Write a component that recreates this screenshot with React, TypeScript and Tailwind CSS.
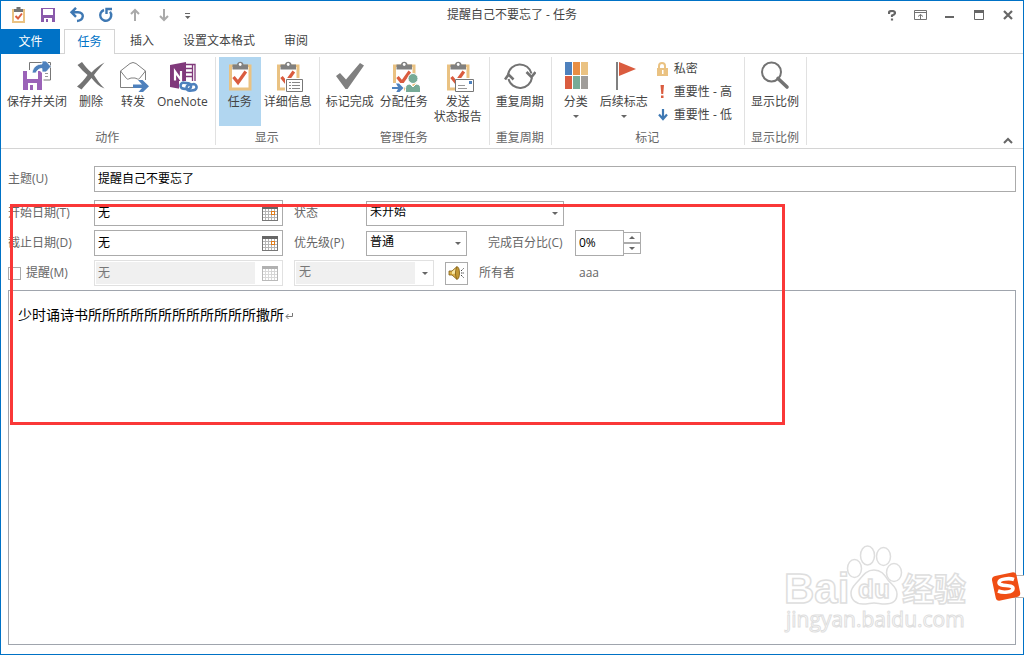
import { ReactNode } from "react";

type RibbonButtonProps = {
  label: string;
  icon: ReactNode;
  active?: boolean;
  menu?: boolean;
};

type RibbonGroupProps = {
  title: string;
  children: ReactNode;
};

function Clipboard() {
  return (
    <>
      <path d="M5 4.500h22.500v26H5z" fill="#eac282" />
      <path d="M8 7h16.500v20.500H8z" fill="#fff" />
      <path d="M8.500 4.500h4.500a3.300 3.300 0 0 1 6.500 0H24v5H8.500z" fill="#808080" />
      <circle cx="16.200" cy="4.500" r="1.400" fill="#fff" />
      <path d="M9.500 17l4.500 5.500 7.800-11" fill="none" stroke="#da5c3f" strokeWidth="3.200" />
    </>
  );
}

function BigIcon({ children }: { children: ReactNode }) {
  return (
    <svg width="32" height="32" viewBox="0 0 32 32" aria-hidden="true">
      {children}
    </svg>
  );
}

function SaveCloseIcon() {
  return (
    <BigIcon>
      <path d="M8.500 10V2.500h21v17.500h-7" fill="#fff" stroke="#777" />
      <path d="M24 10.500h3M24 13.500h3M24 16.500h3" stroke="#999" />
      <path d="M2 11h17l2 2v17H2z" fill="#9b63b8" />
      <path d="M6 11h11v8H6z" fill="#fff" />
      <path d="M7 23h9v7H7z" fill="#fff" />
      <path d="M9 25h3v5H9z" fill="#9b63b8" />
      <path d="M11 13c1-6 5-9 10-9V1h4l5 5.500-5 5.500h-4V8.500c-3 0-5 1.500-6 4.500z" fill="#4e81bd" stroke="#fff" strokeWidth=".8" />
    </BigIcon>
  );
}

function DeleteIcon() {
  return (
    <BigIcon>
      <path d="M2.500 5L7 2c3 4 6 7.500 9.500 10.500C20 9 24 5 29.500 2.500c-3 3.500-7.500 8-10.500 12.500 3 5 6 9 10.500 13.500-5.500-2-9.500-6-13-10.500C13 22 10 25.500 6.500 29.500L2 26.500c4-3 7.500-7 10.500-11.500C9 12 6 9 2.500 5z" fill="#737373" />
    </BigIcon>
  );
}

function ForwardIcon() {
  return (
    <BigIcon>
      <path d="M28.500 20v-9L19 3.500q-3-2-6 0L3.500 11v16.500H16" fill="none" stroke="#808080" />
      <path d="M3.500 11l6 7.500q1 1 2 .5l2.500-1h4l2.500 1q1 .5 2-.5l6-7.500M3.500 11h1M28.500 11h-1" fill="none" stroke="#808080" />
      <path d="M16 24.500h9l-4-4.500h4.500l6.500 6.300-6.500 6.200H21l4-4.500h-9z" fill="#4e81bd" />
    </BigIcon>
  );
}

function OneNoteIcon() {
  return (
    <BigIcon>
      <path d="M19 4.500h10v20H19" fill="#fff" stroke="#80397b" strokeWidth="1.300" />
      <path d="M20 8.500h6M20 12.500h6M20 16.500h6M26.500 5v19" stroke="#80397b" strokeWidth="1.300" />
      <path d="M4 5l16-3v28L4 27z" fill="#80397b" />
      <path d="M9 20.500V11.500l6 8.500V11" fill="none" stroke="#fff" strokeWidth="2.200" />
      <path d="M13 21h19v11H13z" fill="#fff" />
      <g fill="none" stroke="#4e81bd" strokeWidth="2.600">
        <rect x="14.500" y="23" width="10.500" height="6" rx="3" transform="rotate(8 20 26)" />
        <rect x="20.500" y="24.500" width="10" height="6" rx="3" transform="rotate(-8 25 27)" />
      </g>
    </BigIcon>
  );
}

function TaskIcon() {
  return (
    <BigIcon>
      <Clipboard />
    </BigIcon>
  );
}

function DetailsIcon() {
  return (
    <BigIcon>
      <Clipboard />
      <path d="M13 18h19v14H13z" fill="#fff" />
      <path d="M14.500 19.500h16v12h-16z" fill="#fff" stroke="#777" />
      <path d="M17 22.500h2M17 25.500h2M17 28.500h2M20 22.500h8M20 25.500h8M20 28.500h8" stroke="#888" />
    </BigIcon>
  );
}

function CheckIcon() {
  return (
    <BigIcon>
      <path d="M2 16l4-3 6 6.500L26 3l4 2.500L13.500 29h-2z" fill="#808080" />
    </BigIcon>
  );
}

function AssignIcon() {
  return (
    <BigIcon>
      <Clipboard />
      <path d="M3 23h13v9H3z" fill="#fff" />
      <path d="M4 27h6l-2-3.500h3l4.500 4.500-4.500 4.500H8L10 29H4z" fill="#4e81bd" />
      <circle cx="25" cy="18.500" r="5" fill="#77ab97" stroke="#fff" />
      <path d="M17.500 32.500v-4q0-4.500 4.500-4.500l3 3 3-3q4.500 0 4.500 4.500v4z" fill="#77ab97" stroke="#fff" />
    </BigIcon>
  );
}

function SendIcon() {
  return (
    <BigIcon>
      <Clipboard />
      <path d="M13 18h19v14H13z" fill="#fff" />
      <path d="M13.500 19.500h18v12h-18z" fill="#fff" stroke="#777" />
      <path d="M16 25.500h7M16 28.500h9" stroke="#999" />
      <path d="M27 21h3v3h-3z" fill="#4e81bd" />
    </BigIcon>
  );
}

function RecurrenceIcon() {
  return (
    <BigIcon>
      <path d="M4 14.500a12 12 0 0 1 23.500-1M28 17.500a12 12 0 0 1-23.500 1.500" fill="none" stroke="#737373" strokeWidth="2" />
      <path d="M22.500 12l5 5 4-5M1 19.500l3.500-5 5 5" fill="none" stroke="#737373" strokeWidth="2.600" />
    </BigIcon>
  );
}

function CategoriesIcon() {
  return (
    <BigIcon>
      <path d="M5 2h7v13H5z" fill="#4e81bd" />
      <path d="M13 2h7v13h-7z" fill="#e88e43" />
      <path d="M21 2h7v13h-7z" fill="#eac282" />
      <path d="M5 16h7v13H5z" fill="#da5c3f" />
      <path d="M13 16h7v13h-7z" fill="#77ab97" />
      <path d="M21 16h7v13h-7z" fill="#a09d9a" />
    </BigIcon>
  );
}

function FlagIcon() {
  return (
    <BigIcon>
      <path d="M8 2h2v28H8z" fill="#808080" />
      <path d="M11 2l17 7-17 7z" fill="#da5c3f" />
    </BigIcon>
  );
}

function ZoomIcon() {
  return (
    <BigIcon>
      <circle cx="12.500" cy="12" r="9.500" fill="none" stroke="#737373" strokeWidth="2" />
      <path d="M19 18.500l9 8.500" stroke="#737373" strokeWidth="3.600" strokeLinecap="round" />
    </BigIcon>
  );
}

function Triangle({ up }: { up?: boolean }) {
  return (
    <svg width="6" height="3" viewBox="0 0 6 3" aria-hidden="true">
      <path d={up ? "M0 3h6L3 0z" : "M0 0h6L3 3z"} fill="#666" />
    </svg>
  );
}

function RibbonButton({ label, icon, active, menu }: RibbonButtonProps) {
  return (
    <button
      className={`flex h-[69px] min-w-[42px] flex-col items-center px-[3px] pt-[3px] ${
        active ? "bg-[#b1d6f0]" : ""
      }`}
    >
      {icon}
      <span className="mt-[2px] whitespace-pre-line leading-[15px]">{label}</span>
      {menu && (
        <span className="mt-[6px]">
          <Triangle />
        </span>
      )}
    </button>
  );
}

function RibbonGroup({ title, children }: RibbonGroupProps) {
  return (
    <section className="flex flex-col gap-1 border-r border-[#e1e1e1] pr-1 pl-[3px]">
      <div className="flex">{children}</div>
      <h2 className="text-center leading-[15px] text-[#666]">{title}</h2>
    </section>
  );
}

function CalendarIcon({ disabled }: { disabled?: boolean }) {
  return (
    <svg width="16" height="15" viewBox="0 0 16 15" shapeRendering="crispEdges" aria-hidden="true">
      <g opacity={disabled ? 0.5 : 1}>
        <path d="M.5.500h15v14H.5z" fill="#fff" stroke="#777" />
        <path d="M0 0h16v3H0z" fill="#666" />
        <path d="M3.500 3v11M6.500 3v11M9.500 3v11M12.500 3v11M1 5.500h14M1 8.500h14M1 11.500h14" stroke="#b5b5b5" />
        <path d="M9.500 5.500h3v3h-3z" fill="#fff" stroke={disabled ? "#aaa" : "#e07b1a"} />
      </g>
    </svg>
  );
}

function DateField({ id, disabled }: { id: string; disabled?: boolean }) {
  return (
    <div
      className={`flex h-[26px] w-[189px] items-center border p-px ${
        disabled ? "border-[#e1e1e1]" : "border-[#ababab]"
      }`}
    >
      <input
        id={id}
        defaultValue="无"
        disabled={disabled}
        className="h-full w-[159px] px-[2px] pb-[2px] outline-none disabled:bg-[#f0f0f0] disabled:text-[#777]"
      />
      <button type="button" aria-label="选择日期" disabled={disabled} className="ml-[7px]">
        <CalendarIcon disabled={disabled} />
      </button>
    </div>
  );
}

type SelectFieldProps = {
  id: string;
  value: string;
  className: string;
  disabled?: boolean;
};

function SelectField({ id, value, className, disabled }: SelectFieldProps) {
  return (
    <div className={`relative border ${disabled ? "border-[#e1e1e1] p-px" : "border-[#ababab]"} ${className}`}>
      <select
        id={id}
        disabled={disabled}
        aria-label={disabled ? "提醒时间" : undefined}
        className="block h-full w-full appearance-none pb-[2px] pl-[3px] outline-none disabled:w-[119px] disabled:bg-[#f0f0f0] disabled:text-[#777] disabled:opacity-100"
      >
        <option>{value}</option>
      </select>
      <span className="pointer-events-none absolute inset-y-0 right-[5px] flex items-center">
        <Triangle />
      </span>
    </div>
  );
}

function QuickAccess() {
  return (
    <div className="flex items-center gap-[13px] pl-[10px]">
      <button aria-label="任务">
        <svg width="16" height="16" viewBox="0 0 16 16">
          <path d="M1 2h13v14H1z" fill="#eac282" />
          <path d="M3 4h9v10H3z" fill="#fff" />
          <path d="M3 2h2.500V0h4v2H12v3H3z" fill="#737373" />
          <path d="M4.500 9l2.500 2.500L11 6.500" fill="none" stroke="#da5c3f" strokeWidth="2" />
        </svg>
      </button>
      <button aria-label="保存">
        <svg width="16" height="16" viewBox="0 0 16 16">
          <path d="M1 1h14v14H1z" fill="#8a5aab" />
          <path d="M3 2h10v6H3z" fill="#fff" />
          <path d="M4 11h8v4H4z" fill="#fff" />
          <path d="M6 12h2v3H6z" fill="#8a5aab" />
        </svg>
      </button>
      <button aria-label="撤消">
        <svg width="16" height="16" viewBox="0 0 16 16" fill="none" stroke="#3e78b3" strokeWidth="2.400">
          <path d="M7 .8L2.500 5.300 7 9.800M2.500 5.300H9c7 0 6 8-1 8.700" />
        </svg>
      </button>
      <button aria-label="重做">
        <svg width="16" height="16" viewBox="0 0 16 16" fill="none" stroke="#3e78b3" strokeWidth="2.400">
          <path d="M6 3a5.500 5.500 0 1 0 6 1.800" />
          <path d="M8.500 7V2H14" />
        </svg>
      </button>
      <button aria-label="上一项">
        <svg width="16" height="16" viewBox="0 0 16 16" fill="none" stroke="#aaa" strokeWidth="2">
          <path d="M8 14V3M4 7l4-4 4 4" />
        </svg>
      </button>
      <button aria-label="下一项">
        <svg width="16" height="16" viewBox="0 0 16 16" fill="none" stroke="#aaa" strokeWidth="2">
          <path d="M8 2v11M4 9l4 4 4-4" />
        </svg>
      </button>
      <button aria-label="自定义快速访问工具栏">
        <svg width="6" height="16" viewBox="0 0 6 16">
          <path d="M0 6h5v1H0zM0 9h5.500L2.700 12z" fill="#666" />
        </svg>
      </button>
    </div>
  );
}

function WindowControls() {
  const button = "flex w-[29px] items-center justify-center";
  return (
    <div className="flex justify-end pr-px">
      <button aria-label="帮助" className={button}>
        <svg width="8" height="11" viewBox="0 0 8 11" fill="none" stroke="#666" strokeWidth="2.200">
          <path d="M1 4V2.500Q1 1 4 1t3 2q0 1.500-3 2.500V7M4 8.500v2" />
        </svg>
      </button>
      <button aria-label="功能区显示选项" className={button}>
        <svg width="13" height="10" viewBox="0 0 13 10" fill="none" stroke="#737373">
          <path d="M.5.500h12v9H.5zM.5 2.500h12M6.500 9V4.500M4 6.500l2.500-2 2.500 2" />
        </svg>
      </button>
      <button aria-label="最小化" className={button}>
        <svg width="9" height="10" viewBox="0 0 9 10">
          <path d="M0 6h9v2H0z" fill="#666" />
        </svg>
      </button>
      <button aria-label="最大化" className={button}>
        <svg width="10" height="10" viewBox="0 0 10 10">
          <path d="M.5.500h9v9h-9z" fill="none" stroke="#666" />
          <path d="M0 0h10v3H0z" fill="#666" />
        </svg>
      </button>
      <button aria-label="关闭" className={button}>
        <svg width="10" height="10" viewBox="0 0 10 10">
          <path d="M1 1l8 8M9 1L1 9" stroke="#666" strokeWidth="2.200" />
        </svg>
      </button>
    </div>
  );
}

function Ribbon() {
  return (
    <div className="flex border-b border-[#d4d4d4] pt-[3px] pb-[3px] text-[#444]">
      <RibbonGroup title="动作">
        <RibbonButton label="保存并关闭" icon={<SaveCloseIcon />} />
        <RibbonButton label="删除" icon={<DeleteIcon />} />
        <RibbonButton label="转发" icon={<ForwardIcon />} />
        <RibbonButton label="OneNote" icon={<OneNoteIcon />} />
      </RibbonGroup>
      <RibbonGroup title="显示">
        <RibbonButton label="任务" icon={<TaskIcon />} active />
        <RibbonButton label="详细信息" icon={<DetailsIcon />} />
      </RibbonGroup>
      <RibbonGroup title="管理任务">
        <RibbonButton label="标记完成" icon={<CheckIcon />} />
        <RibbonButton label="分配任务" icon={<AssignIcon />} />
        <RibbonButton label={"发送\n状态报告"} icon={<SendIcon />} />
      </RibbonGroup>
      <RibbonGroup title="重复周期">
        <RibbonButton label="重复周期" icon={<RecurrenceIcon />} />
      </RibbonGroup>
      <RibbonGroup title="标记">
        <RibbonButton label="分类" icon={<CategoriesIcon />} menu />
        <RibbonButton label="后续标志" icon={<FlagIcon />} menu />
        <div className="mr-2 ml-1">
          <button className="flex h-[23px] items-center gap-[5px]">
            <svg width="14" height="16" viewBox="0 0 14 16">
              <path d="M4 8V5a3 3 0 0 1 6 0v3" fill="none" stroke="#eac282" strokeWidth="2" />
              <path d="M2 7h11v8H2z" fill="#eac282" />
              <path d="M7 9h1.500v4H7z" fill="#fff" />
            </svg>
            私密
          </button>
          <button className="flex h-[23px] items-center gap-[5px]">
            <svg width="14" height="14" viewBox="0 0 14 14">
              <path d="M5.500 0h3.500l-.8 9H6.300zM6 10.500h2.500V13H6z" fill="#da5c3f" />
            </svg>
            重要性 - 高
          </button>
          <button className="flex h-[23px] items-center gap-[5px]">
            <svg width="14" height="14" viewBox="0 0 14 14">
              <path d="M8 1v10M4 6.500l4 4.500 4-4.500" fill="none" stroke="#3e78b3" strokeWidth="2.200" />
            </svg>
            重要性 - 低
          </button>
        </div>
      </RibbonGroup>
      <RibbonGroup title="显示比例">
        <RibbonButton label="显示比例" icon={<ZoomIcon />} />
      </RibbonGroup>
      <button aria-label="折叠功能区" className="mr-[10px] ml-auto self-end">
        <svg width="10" height="8" viewBox="0 0 10 8">
          <path d="M1 6l4-4 4 4" fill="none" stroke="#666" strokeWidth="2" />
        </svg>
      </button>
    </div>
  );
}

function TaskForm() {
  return (
    <form className="flex flex-col gap-1 text-[#666]">
      <div className="mb-1 flex items-center">
        <label htmlFor="subject" className="w-[86px]">主题(U)</label>
        <input
          id="subject"
          defaultValue="提醒自己不要忘了"
          className="h-[26px] min-w-0 flex-1 border border-[#ababab] px-[3px] pb-[2px] text-black outline-none"
        />
      </div>
      <div className="flex items-center">
        <label htmlFor="start" className="w-[86px]">开始日期(T)</label>
        <div className="text-black">
          <DateField id="start" />
        </div>
        <label htmlFor="status" className="ml-[11px] w-[72px]">状态</label>
        <SelectField id="status" value="未开始" className="h-[25px] w-[198px] text-black" />
      </div>
      <div className="flex items-center">
        <label htmlFor="due" className="w-[86px]">截止日期(D)</label>
        <div className="text-black">
          <DateField id="due" />
        </div>
        <label htmlFor="priority" className="ml-[11px] w-[72px]">优先级(P)</label>
        <SelectField id="priority" value="普通" className="h-[25px] w-[101px] text-black" />
        <label htmlFor="percent" className="ml-[21px] w-[87px]">完成百分比(C)</label>
        <input
          id="percent"
          defaultValue="0%"
          className="h-[26px] w-[49px] border border-[#ababab] px-[3px] pb-[2px] text-black outline-none"
        />
        <div className="flex w-[17px] flex-col">
          <button type="button" aria-label="增加" className="flex h-[11px] items-center justify-center border border-l-0 border-[#ababab]">
            <Triangle up />
          </button>
          <button type="button" aria-label="减少" className="flex h-[11px] items-center justify-center border border-l-0 border-[#ababab]">
            <Triangle />
          </button>
        </div>
      </div>
      <div className="flex items-center">
        <div className="flex w-[86px] items-center gap-[5px]">
          <input
            id="remind"
            type="checkbox"
            className="size-[13px] appearance-none border border-[#ababab] bg-white"
          />
          <label htmlFor="remind">提醒(M)</label>
        </div>
        <DateField id="remind-date" disabled />
        <div className="ml-[11px]">
          <SelectField id="remind-time" value="无" className="h-[26px] w-[140px]" disabled />
        </div>
        <button type="button" aria-label="提醒声音" className="ml-[11px] flex size-[23px] items-center justify-center border border-[#ababab]">
          <svg width="17" height="14" viewBox="0 0 17 14">
            <path d="M1 5h3l5-4.500v13L4 9H1z" fill="#d9b04a" stroke="#7d5b12" strokeWidth=".8" />
            <path d="M4 5.500l4-3v5L4 8z" fill="#f7e6a4" />
            <ellipse cx="9.500" cy="7" rx="2" ry="6" fill="#c49a35" stroke="#7d5b12" strokeWidth=".8" />
            <path d="M13 5l3-3M13 7h3M13 9l3 3" stroke="#444" strokeDasharray="1.500 .7" />
          </svg>
        </button>
        <label htmlFor="owner" className="ml-[11px] w-[100px]">所有者</label>
        <output id="owner">aaa</output>
      </div>
    </form>
  );
}

function Watermark() {
  return (
    <svg
      className="pointer-events-none absolute right-[50px] bottom-[19px]"
      width="190"
      height="95"
      viewBox="0 0 190 95"
      fill="#fff"
      stroke="#dedede"
      strokeWidth="1.500"
    >
      <text x="1" y="63" fontSize="42" fontWeight="700" fontFamily="Liberation Sans, sans-serif">Bai</text>
      <ellipse cx="71.500" cy="28.500" rx="7" ry="9" />
      <ellipse cx="84.500" cy="15.500" rx="7" ry="9.500" />
      <ellipse cx="100.500" cy="16.500" rx="7" ry="9" />
      <ellipse cx="111" cy="32.500" rx="7.500" ry="9" />
      <path d="M91 30c7 0 10 4 14 10 4 5 9 7 9 14 0 8-6 10-12 10-5 0-7-1-11-1s-6 1-11 1c-7 0-12-4-12-11 0-6 4-8 8-13 5-6 8-10 15-10z" />
      <text x="75" y="58" fontSize="26" fontWeight="700" fontFamily="Liberation Sans, sans-serif">du</text>
      <text x="119" y="61" fontSize="32" fontWeight="700" fontFamily="Noto Sans CJK SC, sans-serif">经验</text>
      <text x="3" y="87" fontSize="21" strokeWidth="1" fontFamily="Open Sans, sans-serif">jingyan.baidu.com</text>
    </svg>
  );
}

function InputMethodBadge() {
  return (
    <svg width="34" height="30" viewBox="0 0 34 30" role="img" aria-label="输入法">
      <path d="M15 4.500h20v22H15z" fill="#fff" stroke="#b5b5b5" />
      <rect x="3.500" y="3" width="25" height="25" rx="4" fill="#f04e14" transform="rotate(-12 16 15)" />
      <path d="M24 8.500c-4-1.500-15-1-15 3 0 4.500 14 1.500 14 6 0 4-10 4.500-15 2.500" fill="none" stroke="#fff" strokeWidth="3.600" />
    </svg>
  );
}

export default function App() {
  return (
    <div className="relative flex min-h-screen flex-col border border-[#0072c6] bg-white font-['Open_Sans','Noto_Sans_CJK_SC',sans-serif] text-[12px] leading-[16px]">
      <header className="grid h-[28px] grid-cols-[1fr_auto_1fr] text-[#444]">
        <QuickAccess />
        <h1 className="self-center">提醒自己不要忘了 - 任务</h1>
        <WindowControls />
      </header>

      <nav className="flex h-[25px] border-b border-[#d4d4d4] text-[#444]">
        <button className="h-[25px] w-[59px] bg-[#0072c6] text-white">文件</button>
        <button className="ml-1 h-[25px] w-[51px] border border-b-0 border-[#d4d4d4] bg-white text-[#0072c6]">
          任务
        </button>
        <div className="ml-[15px] flex gap-[29px]">
          <button>插入</button>
          <button>设置文本格式</button>
          <button>审阅</button>
        </div>
      </nav>

      <Ribbon />

      <main className="flex flex-1 flex-col px-[7px] pt-[17px] pb-[9px]">
        <TaskForm />
        <div className="relative mt-1 flex flex-1 border border-[#a0a5ad]">
          <textarea
            aria-label="任务内容"
            defaultValue="少时诵诗书所所所所所所所所所所所所撒所"
            className="flex-1 resize-none px-[9px] pt-[14px] text-[14px] leading-[20px] text-black outline-none"
          />
          <svg className="absolute top-[22px] left-[276px]" width="8" height="7" viewBox="0 0 8 7">
            <path d="M7.500 0v3.500H1M3.500 1L1 3.500 3.500 6" fill="none" stroke="#777" />
          </svg>
        </div>
      </main>

      <div className="pointer-events-none absolute top-[203px] left-[9px] h-[221px] w-[775px] border-3 border-[#fa3838]" />
      <Watermark />
      <div className="absolute -right-px bottom-[53px]">
        <InputMethodBadge />
      </div>
    </div>
  );
}
